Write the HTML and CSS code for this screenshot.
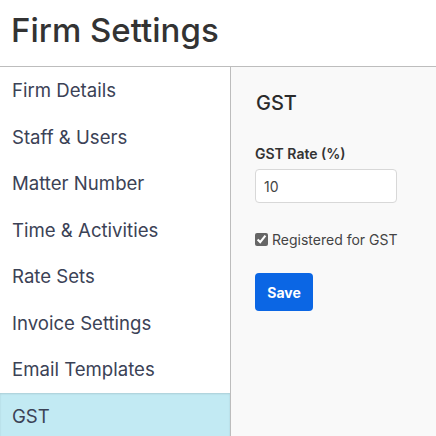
FILE: index.html
```html
<!DOCTYPE html>
<html>
<head>
<meta charset="utf-8">
<link rel="stylesheet" href="styles.css">
</head>
<body>
<header class="page-header"><h1 class="title">Firm Settings</h1></header>
<div class="layout">
  <nav class="sidebar">
    <a class="nav-item">Firm Details</a>
    <a class="nav-item">Staff &amp; Users</a>
    <a class="nav-item">Matter Number</a>
    <a class="nav-item">Time &amp; Activities</a>
    <a class="nav-item">Rate Sets</a>
    <a class="nav-item">Invoice Settings</a>
    <a class="nav-item">Email Templates</a>
    <a class="nav-item active">GST</a>
  </nav>
  <main class="content">
    <h2 class="section-title">GST</h2>
    <label class="field-label">GST Rate (%)</label>
    <input class="text-input" type="text" value="10">
    <label class="check-row"><input type="checkbox" checked> Registered for GST</label>
    <button class="btn-save">Save</button>
  </main>
</div>
</body>
</html>
```
FILE: styles.css
```css
html, body { margin: 0; padding: 0; }
body {
  font-family: Inter, "Noto Sans", sans-serif;
  background: #fff;
  color: #333;
  width: 436px;
  height: 436px;
  overflow: hidden;
}
.page-header {
  height: 66px;
  border-bottom: 1px solid #bdbdbd;
  box-sizing: content-box;
  padding-left: 11px;
  display: flex;
  align-items: center;
}
.title {
  margin: 0 0 6px 0;
  font-size: 33px;
  font-weight: 500;
  color: #333;
  line-height: 1;
}
.layout {
  display: flex;
  height: 369px;
}
.sidebar {
  width: 230px;
  border-right: 1px solid #bdbdbd;
  display: flex;
  flex-direction: column;
  background: #fff;
}
.nav-item {
  display: block;
  padding: 12px 12px;
  font-size: 18.6px;
  line-height: 22.5px;
  color: #3b4256;
}
.nav-item.active {
  background: #c2eaf3;
  box-shadow: inset 0 1px 2px rgba(0,0,0,0.12);
}
.content {
  flex: 1;
  background: #f9f9f9;
  padding: 24px 24px;
  display: flex;
  flex-direction: column;
  align-items: flex-start;
}
.section-title {
  margin: 0 0 0 1px;
  font-size: 20px;
  font-weight: 500;
  color: #2b2b2b;
  line-height: 24px;
}
.field-label {
  margin-top: 30px;
  font-size: 14px;
  line-height: 17px;
  font-weight: 600;
  color: #333;
}
.text-input {
  margin-top: 7px;
  width: 142px;
  height: 34px;
  box-sizing: border-box;
  border: 1px solid #d8d8d8;
  border-radius: 4px;
  background: #fff;
  padding: 0 8px;
  font-family: inherit;
  font-size: 14px;
  color: #444;
}
.check-row {
  margin-top: 28px;
  display: flex;
  align-items: center;
  gap: 4px;
  font-size: 14px;
  line-height: 17px;
  color: #444;
}
.check-row input {
  margin: 0;
  width: 13px;
  height: 13px;
  accent-color: #666;
}
.btn-save {
  margin-top: 25px;
  width: 58px;
  height: 38px;
  border: none;
  border-radius: 4px;
  background: #0b66e4;
  color: #fff;
  font-family: inherit;
  font-size: 14px;
  font-weight: 700;
}
```
